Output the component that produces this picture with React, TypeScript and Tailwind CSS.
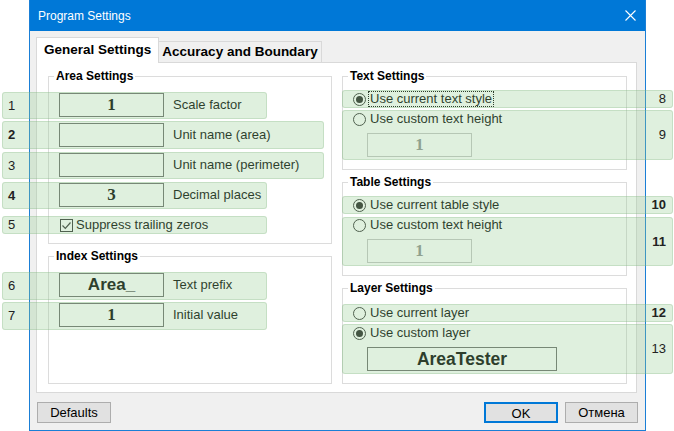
import React from 'react';

type Mark = { n: string; box: string; bold?: boolean; right?: boolean };

// annotation highlights laid over the dialog screenshot
const marks: Mark[] = [
  { n: '1', box: 'left-[2px] top-[92px] w-[265px] h-[27px]' },
  { n: '2', box: 'left-[2px] top-[121px] w-[322px] h-[28px]', bold: true },
  { n: '3', box: 'left-[2px] top-[152px] w-[322px] h-[27px]' },
  { n: '4', box: 'left-[2px] top-[182px] w-[265px] h-[27px]', bold: true },
  { n: '5', box: 'left-[2px] top-[216px] w-[265px] h-[18px]' },
  { n: '6', box: 'left-[2px] top-[272px] w-[265px] h-[28px]' },
  { n: '7', box: 'left-[2px] top-[302px] w-[265px] h-[28px]' },
  { n: '8', box: 'left-[342px] top-[90px] w-[331px] h-[18px]', right: true },
  { n: '9', box: 'left-[342px] top-[110px] w-[331px] h-[50px]', right: true },
  { n: '10', box: 'left-[342px] top-[196px] w-[331px] h-[18px]', right: true, bold: true },
  { n: '11', box: 'left-[342px] top-[217px] w-[331px] h-[49px]', right: true, bold: true },
  { n: '12', box: 'left-[342px] top-[304px] w-[331px] h-[18px]', right: true, bold: true },
  { n: '13', box: 'left-[342px] top-[324px] w-[331px] h-[50px]', right: true },
];

const Group: React.FC<{ title: string; h: string; pt: string; children: React.ReactNode }> = ({ title, h, pt, children }) => (
  <fieldset className={`border border-[#dcdcdc] ${h}`}>
    <legend className="ml-[5px] px-[2px] text-[12px] font-bold leading-[14px]">{title}</legend>
    <div className={`flex flex-col pl-[10px] ${pt}`}>{children}</div>
  </fieldset>
);

const Field: React.FC<{ label: string; children?: React.ReactNode }> = ({ label, children }) => (
  <div className="flex h-[24px] items-center gap-[9px]">
    <div className="flex h-[24px] w-[105px] items-center justify-center border border-[#6a6a6a] bg-white">{children}</div>
    <span className="text-[13px]">{label}</span>
  </div>
);

const Radio: React.FC<{ label: string; checked?: boolean; focus?: boolean }> = ({ label, checked, focus }) => (
  <div className="flex h-[16px] items-center gap-[2px]">
    <div className="flex h-[13px] w-[13px] items-center justify-center rounded-full border border-[#333] bg-white">
      {checked && <div className="h-[7px] w-[7px] rounded-full bg-[#222]" />}
    </div>
    <span className={`border px-px text-[13px] leading-[14px] ${focus ? 'border-dotted border-black' : 'border-transparent'}`}>{label}</span>
  </div>
);

const Serif: React.FC<{ v: string; dim?: boolean }> = ({ v, dim }) => (
  <span className={`font-['Liberation_Serif',serif] text-[17px] font-bold ${dim ? 'text-[#8e8e8e]' : 'text-black'}`}>{v}</span>
);

export default function App() {
  return (
    <div className="relative h-[431px] w-[674px] overflow-hidden bg-white font-['Liberation_Sans',Arial,sans-serif] text-black">
      <div className="ml-[29px] flex h-[431px] w-[617px] flex-col border-x border-b border-[#1a7fd6]">
        {/* title bar */}
        <div className="flex h-[31px] shrink-0 items-center justify-between bg-[#0078d7] pl-[8px] pr-[9px] text-[12px] text-white">
          <span>Program Settings</span>
          <svg width="11" height="11" viewBox="0 0 11 11">
            <path d="M0.5 0.5 L10.5 10.5 M10.5 0.5 L0.5 10.5" stroke="white" strokeWidth="1.1" />
          </svg>
        </div>

        <div className="flex flex-1 flex-col bg-[#f0f0f0] pl-[6px] pr-[8px] pt-[6px]">
          {/* tabs */}
          <div className="flex h-[26px] items-end">
            <div className="relative z-10 flex h-[26px] w-[123px] items-center border-x border-t border-[#d9d9d9] bg-white pl-[7px] text-[13.5px] font-bold">
              General Settings
            </div>
            <div className="flex h-[22px] w-[163px] items-center justify-center border-r border-t border-[#d9d9d9] text-[13.5px] font-bold">
              Accuracy and Boundary
            </div>
          </div>

          {/* page */}
          <div className="relative -mt-px flex h-[331px] gap-[10px] border border-[#d9d9d9] bg-white pl-[11px] pt-[6px]">
            <div className="flex w-[284px] flex-col gap-[5px]">
              <Group title="Area Settings" h="h-[175px]" pt="pt-[10px]">
                <div className="flex flex-col gap-[6px]">
                  <Field label="Scale factor"><Serif v="1" /></Field>
                  <Field label="Unit name (area)" />
                  <Field label="Unit name (perimeter)" />
                  <Field label="Decimal places"><Serif v="3" /></Field>
                </div>
                <div className="mt-[10px] flex h-[16px] items-center gap-[3px] pl-px">
                  <div className="flex h-[13px] w-[13px] items-center justify-center border border-[#333] bg-white">
                    <svg width="11" height="11" viewBox="0 0 11 11">
                      <path d="M1.5 5.5 L4.3 8.3 L9.5 2.5" fill="none" stroke="#333" strokeWidth="1.2" />
                    </svg>
                  </div>
                  <span className="text-[13px]">Suppress trailing zeros</span>
                </div>
              </Group>
              <Group title="Index Settings" h="h-[135px]" pt="pt-[10px]">
                <div className="flex flex-col gap-[6px]">
                  <Field label="Text prefix"><span className="text-[17px] font-bold text-black">Area_</span></Field>
                  <Field label="Initial value"><Serif v="1" /></Field>
                </div>
              </Group>
            </div>

            <div className="flex w-[285px] flex-col gap-[5px]">
              <Group title="Text Settings" h="h-[101px]" pt="pt-[8px]">
                <div className="flex flex-col gap-[4px]">
                  <Radio label="Use current text style" checked focus />
                  <Radio label="Use custom text height" />
                </div>
                <div className="ml-[14px] mt-[6px] flex h-[24px] w-[105px] items-center justify-center border border-[#c4c4c4] bg-white">
                  <Serif v="1" dim />
                </div>
              </Group>
              <Group title="Table Settings" h="h-[101px]" pt="pt-[8px]">
                <div className="flex flex-col gap-[4px]">
                  <Radio label="Use current table style" checked />
                  <Radio label="Use custom text height" />
                </div>
                <div className="ml-[14px] mt-[6px] flex h-[24px] w-[105px] items-center justify-center border border-[#c4c4c4] bg-white">
                  <Serif v="1" dim />
                </div>
              </Group>
              <Group title="Layer Settings" h="h-[103px]" pt="pt-[10px]">
                <div className="flex flex-col gap-[4px]">
                  <Radio label="Use current layer" />
                  <Radio label="Use custom layer" checked />
                </div>
                <div className="ml-[14px] mt-[6px] flex h-[24px] w-[190px] items-center justify-center border border-[#6a6a6a] bg-white">
                  <span className="text-[17.5px] font-bold text-black">AreaTester</span>
                </div>
              </Group>
            </div>
          </div>

          {/* buttons */}
          <div className="-mr-px ml-px mt-[9px] flex items-center justify-between text-[13px]">
            <button className="h-[21px] w-[74px] border border-[#adadad] bg-[#e1e1e1]">Defaults</button>
            <div className="flex gap-[7px]">
              <button className="h-[21px] w-[74px] border-2 border-[#0078d7] bg-[#e1e1e1]">OK</button>
              <button className="h-[21px] w-[73px] border border-[#adadad] bg-[#e1e1e1]">Отмена</button>
            </div>
          </div>
        </div>
      </div>

      {marks.map((m) => (
        <div
          key={m.n}
          className={`absolute flex items-center rounded-[3px] border border-[rgba(120,170,115,0.25)] bg-[rgba(150,205,145,0.3)] text-[13px] text-[#222] ${m.box} ${m.right ? 'justify-end pr-[6px]' : 'pl-[5px]'} ${m.bold ? 'font-bold' : ''}`}
        >
          {m.n}
        </div>
      ))}
    </div>
  );
}
